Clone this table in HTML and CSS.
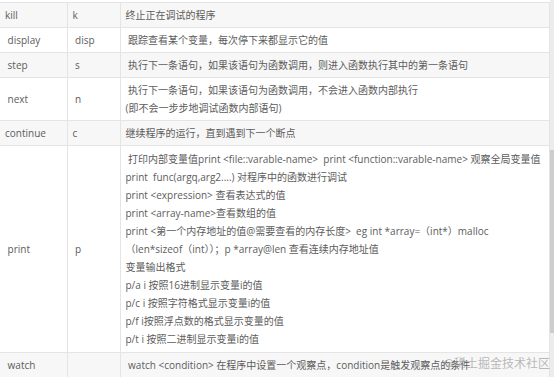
FILE: index.html
```html
<!DOCTYPE html>
<html lang="zh-CN">
<head>
<meta charset="utf-8">
<link rel="stylesheet" href="styles.css">
</head>
<body>
<div class="page">
  <table class="cmds">
    <colgroup><col class="c1"><col class="c2"><col class="c3"></colgroup>
    <tr class="alt"><td>kill</td><td>k</td><td>终止正在调试的程序</td></tr>
    <tr><td>&nbsp;display</td><td>&nbsp;disp</td><td>&nbsp;跟踪查看某个变量，每次停下来都显示它的值</td></tr>
    <tr class="alt"><td>&nbsp;step</td><td>&nbsp;s</td><td>&nbsp;执行下一条语句，如果该语句为函数调用，则进入函数执行其中的第一条语句</td></tr>
    <tr><td>&nbsp;next</td><td>&nbsp;n</td><td><div class="ln">&nbsp;执行下一条语句，如果该语句为函数调用，不会进入函数内部执行</div><div class="ln">(即不会一步步地调试函数内部语句)</div></td></tr>
    <tr class="alt"><td>continue</td><td>c</td><td>继续程序的运行，直到遇到下一个断点</td></tr>
    <tr class="tall"><td>&nbsp;print</td><td>&nbsp;p</td><td>
      <div class="ln">&nbsp;打印内部变量值print &lt;file::varable-name&gt;&nbsp; print &lt;function::varable-name&gt; 观察全局变量值</div>
      <div class="ln">print&nbsp; func(argq,arg2....) 对程序中的函数进行调试</div>
      <div class="ln">print &lt;expression&gt; 查看表达式的值</div>
      <div class="ln">print &lt;array-name&gt;查看数组的值</div>
      <div class="ln">print &lt;第一个内存地址的值@需要查看的内存长度&gt;&nbsp; eg int *array=（int*）malloc</div>
      <div class="ln">（len*sizeof（int））；p *array@len 查看连续内存地址值</div>
      <div class="ln">变量输出格式</div>
      <div class="ln">p/a i 按照16进制显示变量i的值</div>
      <div class="ln">p/c i 按照字符格式显示变量i的值</div>
      <div class="ln">p/f i按照浮点数的格式显示变量的值</div>
      <div class="ln">p/t i 按照二进制显示变量i的值</div>
    </td></tr>
    <tr class="alt"><td>&nbsp;watch</td><td></td><td>&nbsp;watch &lt;condition&gt; 在程序中设置一个观察点，condition是触发观察点的条件</td></tr>
  </table>
  <div class="scroll"><div class="thumb"></div></div>
  <div class="mark">@稀土掘金技术社区</div>
</div>
</body>
</html>
```
FILE: styles.css
```css
html, body {
  margin: 0;
  padding: 0;
  background: #fff;
}
.page {
  position: relative;
  display: flex;
  width: 554px;
  height: 377px;
  padding-top: 2px;
  box-sizing: border-box;
  overflow: hidden;
  font-family: "Open Sans", "Noto Sans CJK SC", sans-serif;
  font-size: 10px;
  color: #5c5c5c;
}
.cmds {
  border-collapse: collapse;
  width: 550px;
  table-layout: fixed;
  align-self: flex-start;
}
.c1 { width: 67px; }
.c2 { width: 53px; }
.cmds td {
  border: 1px solid #e4e4e4;
  padding: 3px 5px;
  line-height: 18px;
  vertical-align: middle;
  white-space: nowrap;
  overflow: hidden;
}
.cmds tr td:first-child { border-left: none; }
.cmds tr.alt td { background: #f7f7f7; }
.cmds tr.tall td { padding-top: 4px; padding-bottom: 4px; }
.ln { line-height: 18px; }
.scroll {
  width: 4px;
  height: 377px;
  margin-top: -2px;
  background: #ececec;
  display: flex;
  flex-direction: column;
}
.thumb {
  margin-top: 150px;
  height: 183px;
  background: #cdcdcd;
}
.mark {
  position: absolute;
  right: 4px;
  bottom: 6px;
  font-size: 12px;
  color: rgba(140, 140, 140, 0.6);
  font-family: "Noto Sans CJK SC", serif;
}
```
